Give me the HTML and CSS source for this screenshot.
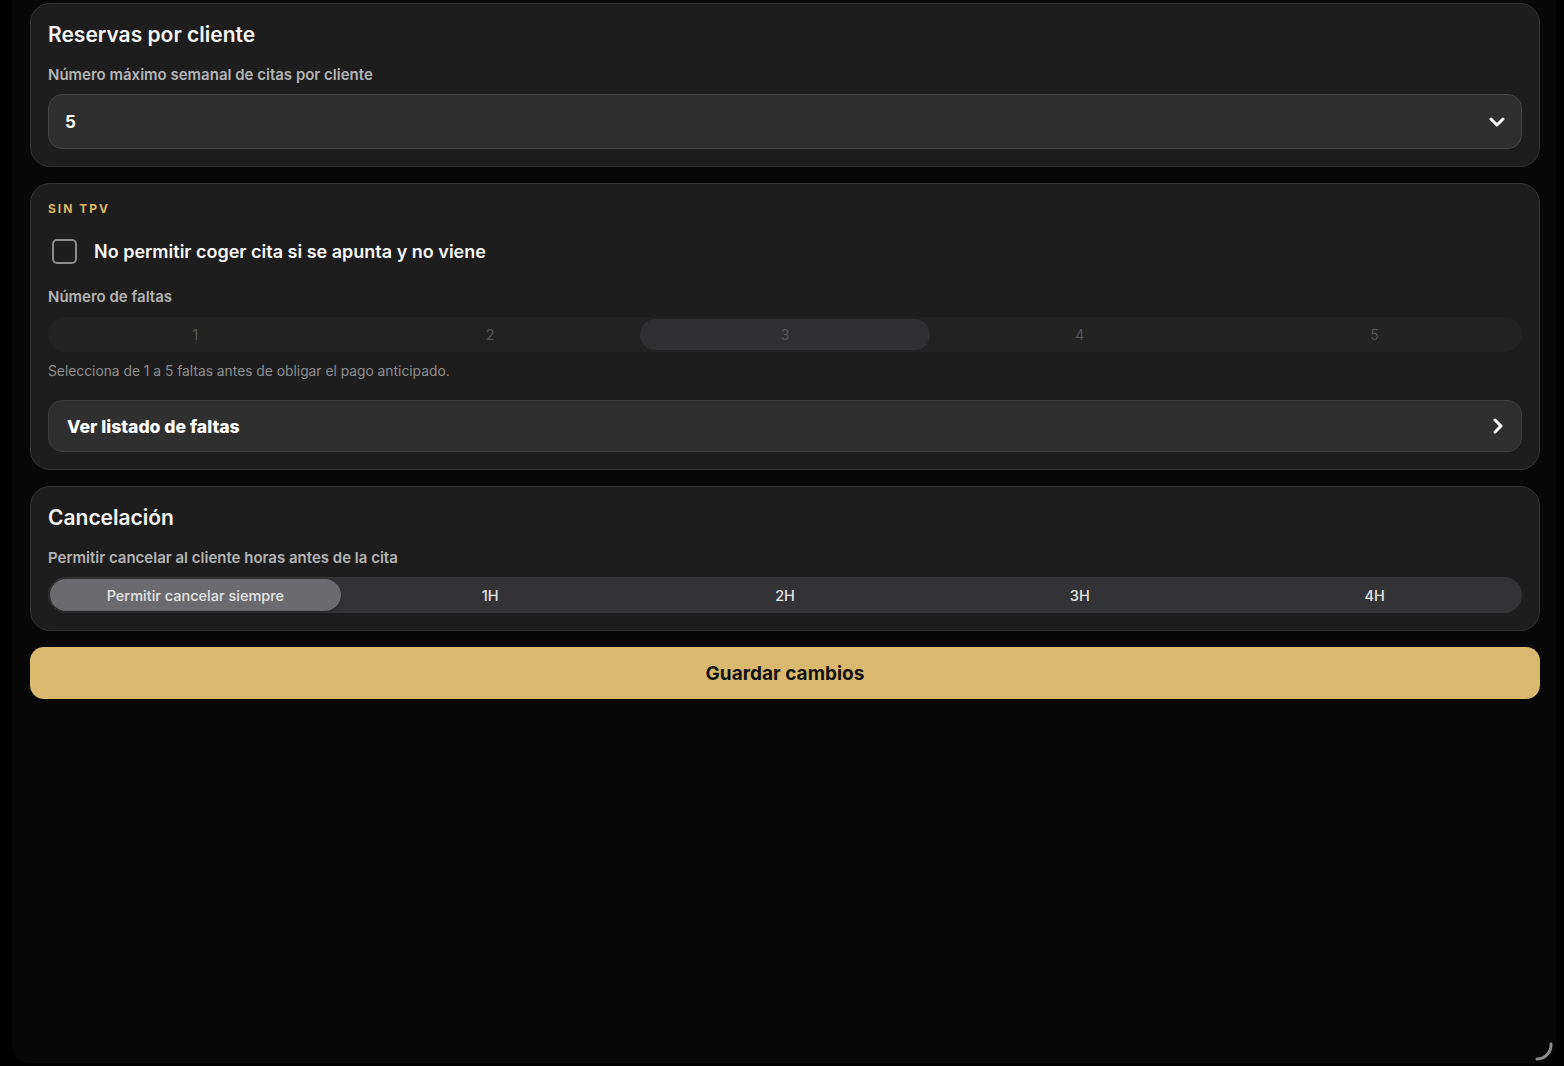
FILE: index.html
```html
<!DOCTYPE html>
<html lang="es">
<head>
    <meta charset="UTF-8">
    <meta name="viewport" content="width=device-width, initial-scale=1.0">
    <title>Ajustes de reservas</title>
    <link rel="stylesheet" href="styles.css">
</head>
<body>
    <div class="panel">
        <section class="card">
            <h2 class="card-title">Reservas por cliente</h2>
            <div class="field-label">Número máximo semanal de citas por cliente</div>
            <div class="select-box">
                <span class="select-value">5</span>
                <svg class="chevron" width="16" height="10" viewBox="0 0 16 10">
                    <path d="M2 2 L8 8 L14 2" fill="none" stroke="#fff" stroke-width="3" stroke-linecap="round" stroke-linejoin="round"/>
                </svg>
            </div>
        </section>

        <section class="card">
            <div class="eyebrow">SIN TPV</div>
            <label class="check-row">
                <span class="checkbox"></span>
                <span class="check-text">No permitir coger cita si se apunta y no viene</span>
            </label>
            <div class="field-label">Número de faltas</div>
            <div class="segmented segmented-muted">
                <span class="segment">1</span>
                <span class="segment">2</span>
                <span class="segment active">3</span>
                <span class="segment">4</span>
                <span class="segment">5</span>
            </div>
            <p class="hint">Selecciona de 1 a 5 faltas antes de obligar el pago anticipado.</p>
            <div class="link-row">
                <span class="link-text">Ver listado de faltas</span>
                <svg class="chevron" width="10" height="16" viewBox="0 0 10 16">
                    <path d="M2 2 L8 8 L2 14" fill="none" stroke="#fff" stroke-width="3" stroke-linecap="round" stroke-linejoin="round"/>
                </svg>
            </div>
        </section>

        <section class="card">
            <h2 class="card-title">Cancelación</h2>
            <div class="field-label">Permitir cancelar al cliente horas antes de la cita</div>
            <div class="segmented segmented-light">
                <span class="segment active">Permitir cancelar siempre</span>
                <span class="segment">1H</span>
                <span class="segment">2H</span>
                <span class="segment">3H</span>
                <span class="segment">4H</span>
            </div>
        </section>

        <button class="save-btn" type="button">Guardar cambios</button>

        <svg class="resize-grip" width="20" height="20" viewBox="0 0 20 20">
            <path d="M17 2 A14 14 0 0 1 3 17" fill="none" stroke="#8a8a8a" stroke-width="3" stroke-linecap="round"/>
        </svg>
    </div>
</body>
</html>
```

FILE: styles.css
```css
* {
    margin: 0;
    padding: 0;
    box-sizing: border-box;
    font-family: Inter, 'Noto Sans', sans-serif;
}

body {
    background: #000;
    height: 100vh;
    overflow: hidden;
}

.panel {
    position: relative;
    display: flex;
    flex-direction: column;
    gap: 16px;
    margin: 0 8px 0 12px;
    height: 1063px;
    padding: 3px 16px 0 18px;
    background: #070707;
    border-radius: 0 0 18px 18px;
}

.card {
    display: flex;
    flex-direction: column;
    background: #1d1d1d;
    border: 1px solid #353535;
    border-radius: 20px;
    padding: 17px 17px 17px;
}

.card-title {
    color: #f5f5f5;
    font-size: 21px;
    font-weight: 600;
    line-height: 28px;
    margin-bottom: 16px;
}

.field-label {
    color: #b4b4b4;
    font-size: 15px;
    font-weight: 600;
    line-height: 20px;
    margin-bottom: 9px;
}

.select-box {
    display: flex;
    align-items: center;
    justify-content: space-between;
    height: 55px;
    padding: 0 16px 0 16px;
    background: #2f2f2f;
    border: 1px solid #454545;
    border-radius: 14px;
}

.select-value {
    color: #fff;
    font-size: 17px;
    font-weight: 700;
}

.eyebrow {
    color: #d9b867;
    font-size: 12px;
    font-weight: 700;
    letter-spacing: 2px;
    line-height: 16px;
    margin-bottom: 20px;
}

.check-row {
    display: flex;
    align-items: center;
    gap: 17px;
    height: 28px;
    padding-left: 4px;
    margin-bottom: 22px;
}

.checkbox {
    width: 25px;
    height: 25px;
    border: 2.5px solid #8c8c8c;
    border-radius: 5px;
}

.check-text {
    color: #f7f7f7;
    font-size: 18px;
    font-weight: 600;
}

/* pills sit inside each equal slot, inset by 2px */
.segmented {
    display: flex;
    border-radius: 18px;
}

.segment {
    flex: 1;
    display: flex;
    align-items: center;
    justify-content: center;
    margin: 2px;
    border-radius: 16px;
}

.segmented-muted {
    height: 35px;
    margin-top: 1px;
    background: #222222;
}

.segmented-muted .segment {
    color: #555;
    font-size: 14px;
}

.segmented-muted .segment.active {
    background: #303032;
}

.segmented-light {
    height: 36px;
    background: #333336;
}

.segmented-light .segment {
    color: #e4e4e4;
    font-size: 14.5px;
    font-weight: 500;
}

.segmented-light .segment.active {
    background: #6b6b6f;
    box-shadow: 0 1px 3px rgba(0, 0, 0, 0.35);
}

.hint {
    color: #8d8d8d;
    font-size: 13.8px;
    line-height: 18px;
    margin: 10px 0 20px;
}

.link-row {
    display: flex;
    align-items: center;
    justify-content: space-between;
    height: 52px;
    padding: 0 18px;
    background: #2f2f2f;
    border: 1px solid #3d3d3d;
    border-radius: 14px;
}

.link-text {
    color: #fff;
    font-size: 17.6px;
    font-weight: 800;
}

.save-btn {
    height: 52px;
    background: #dab96e;
    border: none;
    border-radius: 14px;
    color: #111;
    font-size: 19px;
    font-weight: 700;
}

.resize-grip {
    position: absolute;
    right: 2px;
    bottom: 1px;
}
```
